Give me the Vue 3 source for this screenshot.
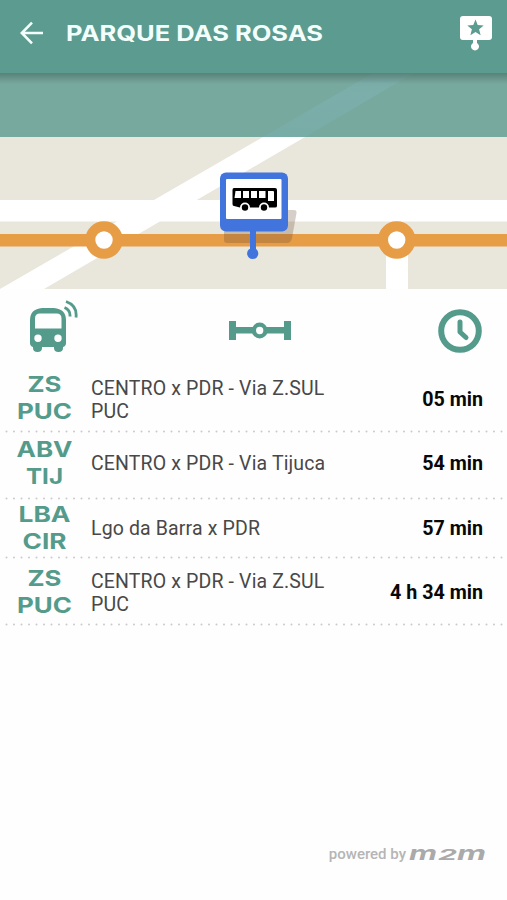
<script setup>
const rows = [
  { code: [['ZS', 34], ['PUC', 55]], name: ['CENTRO x PDR - Via Z.SUL', 'PUC'], time: '05 min', size: 'first' },
  { code: [['ABV', 56], ['TIJ', 37]], name: ['CENTRO x PDR - Via Tijuca'], time: '54 min', size: 'second' },
  { code: [['LBA', 52], ['CIR', 44]], name: ['Lgo da Barra x PDR'], time: '57 min', size: 'third' },
  { code: [['ZS', 34], ['PUC', 55]], name: ['CENTRO x PDR - Via Z.SUL', 'PUC'], time: '4 h 34 min', size: 'fourth' },
]
</script>

<template>
  <main class="screen">
    <header class="bar">
      <svg class="back" viewBox="0 0 24 24"><path d="M23 12H2M12 1.7 1.8 12 12 22.3" /></svg>
      <svg class="title" viewBox="0 0 260 30">
        <text x="0" y="23" textLength="257" lengthAdjust="spacingAndGlyphs">PARQUE DAS ROSAS</text>
      </svg>
      <svg class="favorite" viewBox="0 0 34 36">
        <path fill="#fff" fill-rule="evenodd" d="M4 0H30a3 3 0 0 1 3 3V21a3 3 0 0 1-3 3H18v3a4 4 0 1 1-4 0V24H4a3 3 0 0 1-3-3V3a3 3 0 0 1 3-3ZM16.500 3.500l-2.200 5.500-6 .4 4.600 3.800-1.500 6 5.100-3.300 5.100 3.300-1.500-6 4.600-3.800-6-.4Z" />
      </svg>
    </header>

    <svg class="map" viewBox="0 73 507 216">
      <defs>
        <linearGradient id="shade" x1="0" y1="0" x2="0" y2="1">
          <stop offset="0" stop-color="#486c64" stop-opacity=".65" />
          <stop offset="1" stop-color="#486c64" stop-opacity="0" />
        </linearGradient>
        <linearGradient id="road" x1="0" y1="0" x2="0" y2="1">
          <stop offset="0" stop-color="#7caeab" stop-opacity=".5" />
          <stop offset=".35" stop-color="#7caeab" />
          <stop offset="1" stop-color="#78aca6" />
        </linearGradient>
      </defs>
      <path fill="#e9e6dc" d="M0 137H507V289H0Z" />
      <path fill="#fff" d="M0 200H507V221.500H0ZM386 250H408V289H386ZM263 137H305L44 289H0Z" />
      <path fill="#78a99e" d="M0 73H507V137H0Z" />
      <path fill="url(#road)" d="M263 137 373 73H414L305 137Z" />
      <path fill="url(#shade)" d="M0 73H507V84H0Z" />
      <path fill="#e79c46" d="M0 234H507V246.500H0Z" />
      <g fill="#fff" stroke="#e79c46" stroke-width="10">
        <circle cx="104" cy="240" r="13.700" />
        <circle cx="396.700" cy="240" r="13.700" />
      </g>
      <path fill="#684a32" fill-opacity=".27" d="M224 228 288 210H294q3 0 2.500 3L292 238q-1 5-5 5H227q-3 0-3-3Z" />
      <path stroke="#4175dd" stroke-width="6" d="M253 230V253" />
      <circle cx="252.700" cy="253.500" r="5.600" fill="#4175dd" />
      <rect x="220" y="172.500" width="68" height="59" rx="6" fill="#4175dd" />
      <rect x="226" y="179" width="55.500" height="40" rx="1" fill="#fff" />
      <path d="M234 188H275q2 0 2 2v16q0 1.500-2 1.500h-6a5 5 0 0 0-10 0h-9a5 5 0 0 0-10 0l-6-1.500q-1.500 0-1.500-2v-14q0-2 1.500-2Z" />
      <path fill="#fff" d="M235.500 191h5.500v7h-6.500ZM243 191h6v7h-6ZM251 191h6v7h-6ZM259 191h6.500v7H259ZM268 191h5q1 0 1 1v9h-6Z" />
      <circle cx="245" cy="207.500" r="3.200" />
      <circle cx="264" cy="207.500" r="3.200" />
    </svg>

    <section class="legend">
      <svg class="live" viewBox="0 0 52 54">
        <path fill="#549b8b" fill-rule="evenodd" d="M16 9H28q12 1 12 12V44q0 3-3 4v1q0 4-4.500 4T28 49v-1H16v1q0 4-4.500 4T7 49v-1q-3-1-3-4V21Q4 10 16 9ZM14 14.500q-5 0-5 5v10H35.500V19.500q0-5-5-5ZM12 35.500a3.700 3.700 0 1 0 0 7.400 3.700 3.700 0 0 0 0-7.400ZM32 35.500a3.700 3.700 0 1 0 0 7.400 3.700 3.700 0 0 0 0-7.400Z" />
        <path fill="none" stroke="#549b8b" stroke-width="2.800" d="M38.500 8.500q6 2.500 5.500 9M40 2.500q11.500 4 10 16" />
      </svg>
      <svg class="route" viewBox="0 0 62 20">
        <path fill="#549b8b" d="M0 1H7V7H55V1H62V20H55V13.500H7V20H0Z" />
        <circle cx="30.700" cy="10.500" r="5.800" fill="#fff" stroke="#549b8b" stroke-width="4.300" />
      </svg>
      <svg class="clock" viewBox="0 0 44 44">
        <circle cx="22" cy="22" r="18.800" />
        <path d="M22 13V23L28 28.500" />
      </svg>
    </section>

    <section class="departures">
      <article v-for="(row, i) in rows" :key="i" class="row" :class="row.size">
        <svg class="code" viewBox="0 0 60 54">
          <text v-for="([label, width], n) in row.code" :key="label" x="29.500" :y="20 + n * 26.500" :textLength="width" lengthAdjust="spacingAndGlyphs">{{ label }}</text>
        </svg>
        <p class="name"><span v-for="line in row.name" :key="line">{{ line }}</span></p>
        <strong class="time">{{ row.time }}</strong>
        <svg class="dots" viewBox="0 0 498 3"><path d="M1.500 1.500H498" /></svg>
      </article>
    </section>

    <footer class="credit">
      <span>powered by</span>
      <svg class="brand" viewBox="0 0 80 22">
        <text x="1" y="17" textLength="28" lengthAdjust="spacingAndGlyphs">m</text>
        <text class="digit" x="30" y="17" textLength="19" lengthAdjust="spacingAndGlyphs">2</text>
        <text x="49" y="17" textLength="29" lengthAdjust="spacingAndGlyphs">m</text>
      </svg>
    </footer>
  </main>
</template>

<style>
body { margin: 0; }
</style>

<style scoped>
.screen { width: 507px; height: 900px; background: #fefefe; display: flex; flex-direction: column; font-family: Roboto, sans-serif; overflow: hidden; }
svg { display: block; flex: none; }
.bar { height: 73px; flex: none; background: #5b9b90; display: flex; align-items: flex-start; }
.back { width: 24px; height: 24px; margin: 21px 0 0 20px; fill: none; stroke: #f2fffc; stroke-width: 2.6; }
.title { width: 260px; height: 30px; margin: 18px 0 0 22px; overflow: visible; }
.title text { font: 700 21.500px Inter, sans-serif; fill: #f2fffc; }
.favorite { width: 34px; height: 36px; margin: 16px 14px 0 auto; }
.map { width: 507px; height: 216px; }
.legend { height: 77px; flex: none; display: flex; align-items: flex-start; }
.live { width: 52px; height: 54px; margin: 10px 0 0 26px; }
.route { width: 62px; height: 20px; margin: 31px 0 0 151px; }
.clock { width: 44px; height: 44px; margin: 20px 25px 0 auto; fill: none; stroke: #549b8b; stroke-width: 6; stroke-linecap: round; stroke-linejoin: round; }
.clock path { stroke-width: 5; }
.row { display: grid; grid-template-columns: 60px 1fr auto; grid-template-rows: 1fr 3px; column-gap: 16px; padding: 0 24px 0 15px; box-sizing: border-box; align-items: center; }
.first { height: 67px; padding-top: 3px; }
.second { height: 67px; }
.second .name, .second .time { padding-bottom: 3px; }
.third { height: 57px; padding-top: 1px; }
.fourth { height: 69px; padding-top: 5px; }
.code { width: 60px; height: 54px; align-self: start; overflow: visible; }
.first .code { margin-top: 2.500px; }
.second .code { margin-top: 3.500px; }
.third .code { margin-top: .500px; }
.fourth .code { margin-top: 3.500px; }
.code text { font: 700 21.500px Inter, sans-serif; fill: #549b8b; text-anchor: middle; }
.name { margin: 0; font-size: 19.500px; line-height: 23px; letter-spacing: .14px; color: #484848; }
.name span { display: block; white-space: nowrap; }
.time { font-size: 19.700px; color: #080808; font-weight: 700; white-space: nowrap; }
.dots { grid-column: 1 / -1; width: 498px; height: 3px; margin: 0 -20px 0 -10px; fill: none; stroke: #cbcbcb; stroke-width: 2; stroke-linecap: round; stroke-dasharray: 0 7.500; }
.credit { margin: auto 19px 35px auto; display: flex; align-items: center; gap: 2px; color: #b5b5b5; font-size: 15px; font-weight: 500; line-height: 22px; }
.brand { width: 80px; height: 22px; overflow: visible; }
.brand text { font: italic 700 20px Inter, sans-serif; fill: #aaa; }
.brand .digit { font-size: 15px; }
</style>
